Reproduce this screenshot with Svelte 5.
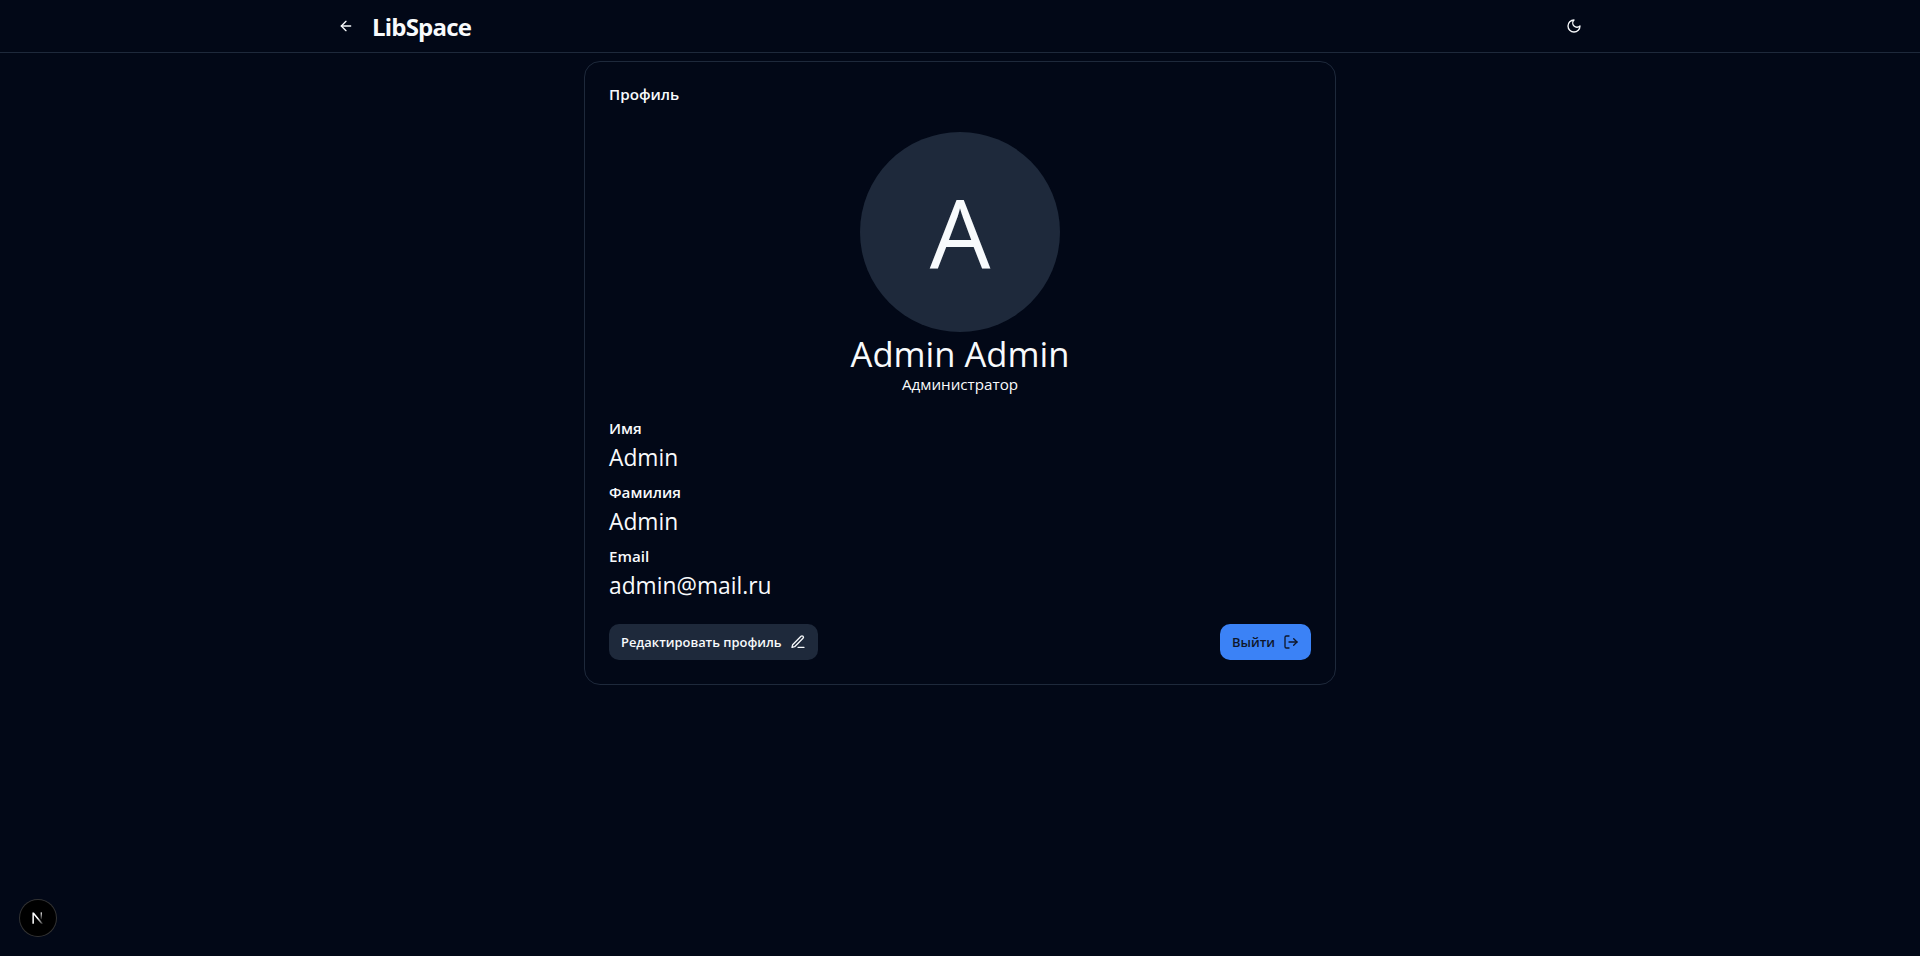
<script>
  const fields = [
    { label: 'Имя', value: 'Admin' },
    { label: 'Фамилия', value: 'Admin' },
    { label: 'Email', value: 'admin@mail.ru' }
  ];
</script>

<div class="page">
  <header class="header">
    <div class="bar">
      <div class="left">
        <button class="icon-btn" aria-label="Назад">
          <svg width="16" height="16" viewBox="0 0 24 24"><path d="m12 19-7-7 7-7" /><path d="M19 12H5" /></svg>
        </button>
        <span class="logo">LibSpace</span>
      </div>
      <button class="icon-btn" aria-label="Тема">
        <svg width="16" height="16" viewBox="0 0 24 24"><path d="M12 3a6 6 0 0 0 9 9 9 9 0 1 1-9-9Z" /></svg>
      </button>
    </div>
  </header>

  <main class="main">
    <section class="card">
      <h2 class="title">Профиль</h2>
      <div class="identity">
        <div class="avatar">A</div>
        <div class="name">Admin Admin</div>
        <div class="role">Администратор</div>
      </div>
      <div class="fields">
        {#each fields as f}
          <div class="field">
            <div class="label">{f.label}</div>
            <div class="value">{f.value}</div>
          </div>
        {/each}
      </div>
      <div class="actions">
        <button class="btn secondary">
          Редактировать профиль
          <svg width="16" height="16" viewBox="0 0 24 24"><path d="M12 20h9" /><path d="M16.5 3.5a2.12 2.12 0 0 1 3 3L7 19l-4 1 1-4Z" /></svg>
        </button>
        <button class="btn primary">
          Выйти
          <svg width="16" height="16" viewBox="0 0 24 24"><path d="M9 21H5a2 2 0 0 1-2-2V5a2 2 0 0 1 2-2h4" /><path d="m16 17 5-5-5-5" /><path d="M21 12H9" /></svg>
        </button>
      </div>
    </section>
  </main>

  <div class="next-badge">
    <svg width="18" height="18" viewBox="0 0 18 18" class="n">
      <defs>
        <linearGradient id="nd" x1="0" y1="0" x2="1" y2="1">
          <stop offset="0.5" stop-color="#fff" />
          <stop offset="1" stop-color="#fff" stop-opacity="0.15" />
        </linearGradient>
        <linearGradient id="ns" x1="0" y1="0" x2="0" y2="1">
          <stop offset="0" stop-color="#fff" stop-opacity="0.9" />
          <stop offset="1" stop-color="#fff" stop-opacity="0.1" />
        </linearGradient>
      </defs>
      <path d="M3.4 3.4h1.5l9.2 11.4h-2L4.9 6v8.8H3.4Z" class="diag" />
      <rect x="11.6" y="3.4" width="1.4" height="7" class="stem" />
    </svg>
  </div>
</div>

<style>
  :global(body) {
    margin: 0;
    background: #020817;
  }
  .page {
    min-height: 956px;
    background: #020817;
    color: #f8fafc;
    font-family: "Open Sans", "Noto Sans", "Liberation Sans", sans-serif;
  }
  svg {
    fill: none;
    stroke: currentColor;
    stroke-width: 2;
    stroke-linecap: round;
    stroke-linejoin: round;
    flex: none;
  }
  button {
    font-family: inherit;
    border: none;
    background: none;
    color: inherit;
    padding: 0;
  }
  .header {
    height: 52px;
    border-bottom: 1px solid #1e293b;
  }
  .bar {
    width: 1280px;
    height: 52px;
    margin: 0 auto;
    padding: 0 18px;
    box-sizing: border-box;
    display: flex;
    align-items: center;
    justify-content: space-between;
  }
  .left {
    display: flex;
    align-items: center;
    gap: 18px;
  }
  .icon-btn {
    width: 16px;
    height: 16px;
    display: flex;
    margin-top: -1px;
  }
  .logo {
    font-size: 24px;
    line-height: 32px;
    font-weight: 700;
    letter-spacing: -0.8px;
    margin-top: 2px;
  }
  .main {
    display: flex;
    justify-content: center;
    padding-top: 8px;
  }
  .card {
    width: 752px;
    box-sizing: border-box;
    border: 1px solid #1e293b;
    border-radius: 16px;
    padding: 24px;
  }
  .title {
    margin: 0;
    font-size: 15.2px;
    line-height: 16px;
    font-weight: 600;
  }
  .identity {
    display: flex;
    flex-direction: column;
    align-items: center;
    margin-top: 30px;
  }
  .avatar {
    width: 200px;
    height: 200px;
    border-radius: 50%;
    background: #1e293b;
    display: flex;
    align-items: center;
    justify-content: center;
    font-size: 96px;
    line-height: 96px;
  }
  .name {
    font-size: 34.6px;
    line-height: 40px;
    margin-top: 2px;
  }
  .role {
    font-size: 15.2px;
    line-height: 24px;
    margin-top: -2px;
  }
  .fields {
    margin-top: 20px;
  }
  .field {
    margin-bottom: 6px;
  }
  .label {
    font-size: 15.2px;
    line-height: 24px;
    font-weight: 600;
  }
  .value {
    font-size: 22.8px;
    line-height: 32px;
    margin-top: 2px;
  }
  .actions {
    display: flex;
    justify-content: space-between;
    margin-top: 22px;
  }
  .btn {
    height: 36px;
    padding: 0 12px;
    border-radius: 10px;
    display: flex;
    align-items: center;
    gap: 8px;
    font-size: 12.9px;
    font-weight: 600;
  }
  .secondary {
    background: #1e293b;
    color: #f8fafc;
  }
  .primary {
    background: #3b82f6;
    color: #0f172a;
  }
  .next-badge {
    position: fixed;
    left: 20px;
    bottom: 20px;
    width: 36px;
    height: 36px;
    border-radius: 50%;
    background: #000;
    box-shadow: 0 0 0 1px #333;
    display: flex;
    align-items: center;
    justify-content: center;
  }
  .n {
    stroke: none;
  }
  .diag {
    fill: url(#nd);
  }
  .stem {
    fill: url(#ns);
  }
</style>
